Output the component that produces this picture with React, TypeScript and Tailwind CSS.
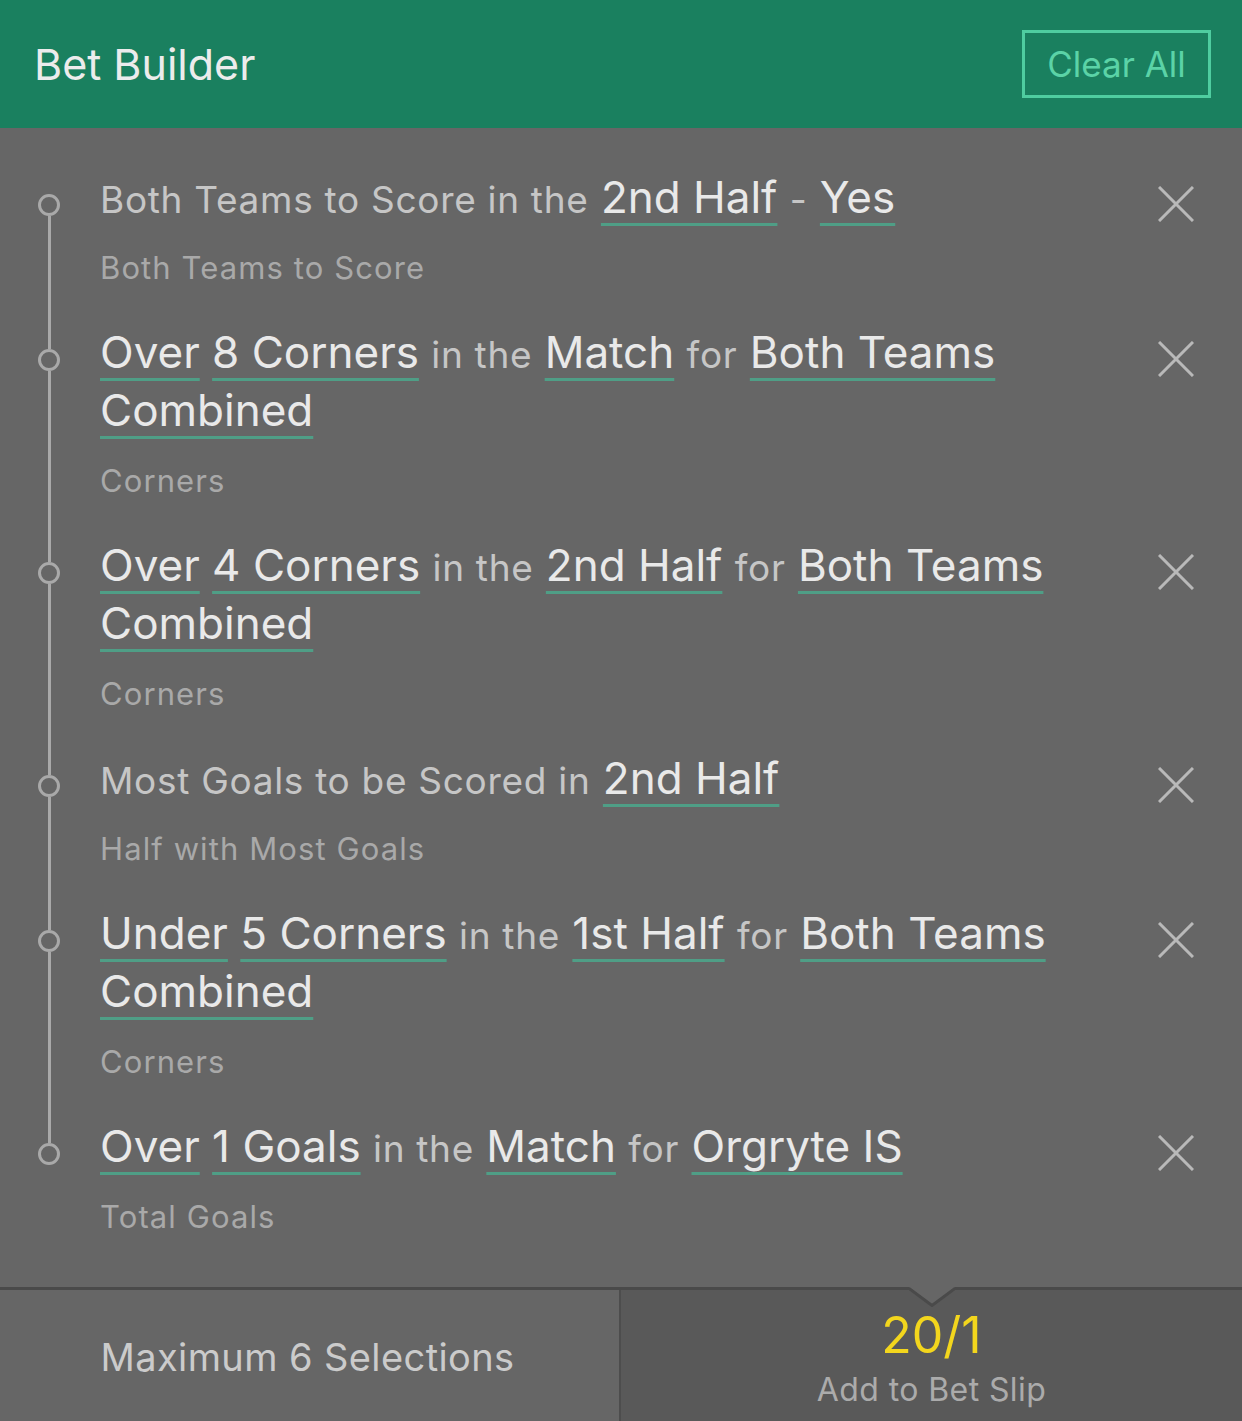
import React from "react";

type Part = { t: string; kind: "plain" | "pick" };

type Selection = {
  parts: Part[];
  market: string;
};

const p = (t: string): Part => ({ t, kind: "plain" });
const k = (t: string): Part => ({ t, kind: "pick" });

const selections: Selection[] = [
  {
    parts: [p("Both Teams to Score in the"), k("2nd Half"), p("-"), k("Yes")],
    market: "Both Teams to Score",
  },
  {
    parts: [k("Over"), k("8 Corners"), p("in the"), k("Match"), p("for"), k("Both Teams Combined")],
    market: "Corners",
  },
  {
    parts: [k("Over"), k("4 Corners"), p("in the"), k("2nd Half"), p("for"), k("Both Teams Combined")],
    market: "Corners",
  },
  {
    parts: [p("Most Goals to be Scored in"), k("2nd Half")],
    market: "Half with Most Goals",
  },
  {
    parts: [k("Under"), k("5 Corners"), p("in the"), k("1st Half"), p("for"), k("Both Teams Combined")],
    market: "Corners",
  },
  {
    parts: [k("Over"), k("1 Goals"), p("in the"), k("Match"), p("for"), k("Orgryte IS")],
    market: "Total Goals",
  },
];

function CloseIcon() {
  return (
    <svg width="36" height="36" viewBox="0 0 36 36" fill="none" stroke="#b9b9b9" strokeWidth={3}>
      <path d="M1 1 L35 35 M35 1 L1 35" />
    </svg>
  );
}

function SelectionRow({ sel, first, last }: { sel: Selection; first: boolean; last: boolean }) {
  return (
    <div className="flex">
      <div className="flex w-[98px] shrink-0 flex-col items-center">
        <div className={`h-[27px] w-[3px] ${first ? "" : "bg-[#a9a9a9]"}`} />
        <div className="h-[22px] w-[22px] rounded-full border-[3px] border-[#a9a9a9]" />
        <div className={`w-[3px] flex-1 ${last ? "" : "bg-[#a9a9a9]"}`} />
      </div>
      <div className="min-w-0 flex-1 pb-[34px] pl-[2px] pt-[1px]">
        <p className="text-[44px] leading-[58px]">
          {sel.parts.map((part, i) => (
            <React.Fragment key={i}>
              {i > 0 && " "}
              {part.kind === "pick" ? (
                <span className="text-[#e9e9e9] underline decoration-[#4f9e86] decoration-[3px] underline-offset-[10px]">
                  {part.t}
                </span>
              ) : (
                <span className="text-[37px] leading-none tracking-[0.7px] text-[#c6c6c6]">{part.t}</span>
              )}
            </React.Fragment>
          ))}
        </p>
        <p className="mt-[22px] text-[31px] leading-[40px] tracking-[1.1px] text-[#a9a9a9]">{sel.market}</p>
      </div>
      <div className="flex w-[132px] shrink-0 justify-end pr-[48px] pt-[19px]">
        <div>
          <CloseIcon />
        </div>
      </div>
    </div>
  );
}

export default function App() {
  return (
    <div className="flex h-[1421px] w-[1242px] flex-col bg-[#666666] font-['Inter',sans-serif]">
      <header className="flex h-[128px] shrink-0 items-center justify-between bg-[#1a805f] pl-[34px] pr-[31px]">
        <h1 className="text-[43px] font-normal text-[#ececec]">Bet Builder</h1>
        <button className="flex h-[68px] w-[189px] items-center justify-center border-[3px] border-[#4fcda0] text-[35px] text-[#5bd3a7]">
          Clear All
        </button>
      </header>

      <div className="flex-1 pt-[39px]">
        {selections.map((sel, i) => (
          <SelectionRow key={i} sel={sel} first={i === 0} last={i === selections.length - 1} />
        ))}
      </div>

      <footer className="relative grid h-[134px] shrink-0 grid-cols-[621px_1fr] border-t-[3px] border-[#4a4a4a]">
        <div className="flex items-center justify-center border-r-[2px] border-[#4d4d4d] bg-[#666666] pr-[4px] pt-[4px]">
          <span className="text-[38px] tracking-[0.4px] text-[#cbcbcb]">Maximum 6 Selections</span>
        </div>
        <div className="relative flex flex-col items-center bg-[#595959] pt-[17px]">
          <svg className="absolute -top-[3px] left-1/2 -translate-x-1/2" width="46" height="20" viewBox="0 0 46 20">
            <path d="M0 0 L23 18 L46 0 Z" fill="#666666" />
            <path d="M0 1.5 L23 18.5 L46 1.5" fill="none" stroke="#4a4a4a" strokeWidth={3} />
          </svg>
          <span className="text-[50px] leading-[56px] text-[#f3d61d]">20/1</span>
          <span className="mt-[7px] text-[32px] leading-[40px] tracking-[0.4px] text-[#ababab]">Add to Bet Slip</span>
        </div>
      </footer>
    </div>
  );
}
